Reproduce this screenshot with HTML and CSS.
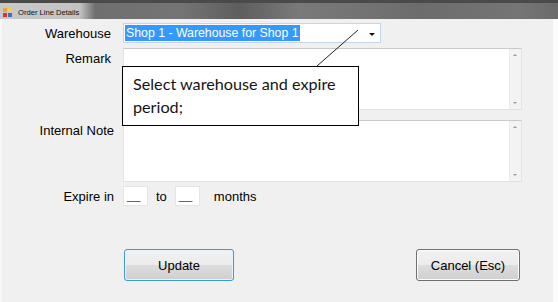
FILE: index.html
```html
<!DOCTYPE html>
<html lang="en">

<head>
  <meta charset="UTF-8" />
  <title>Order Line Details</title>
  <link rel="stylesheet" href="styles.css">
</head>

<body>
  <div class="window">
    <div class="titlebar">
      <svg class="app-icon" width="9" height="9" viewBox="0 0 9 9">
        <rect x="0" y="0" width="4" height="4" fill="#e8a33a" />
        <rect x="5" y="0" width="4" height="4" fill="#f2d04a" />
        <rect x="0" y="5" width="4" height="4" fill="#d8342c" />
        <rect x="5" y="5" width="4" height="4" fill="#3d6fc4" />
      </svg>
      <span class="title">Order Line Details</span>
    </div>

    <div class="client">
      <div class="form">
        <div class="row row-combo">
          <label class="lbl lbl-in">Warehouse</label>
          <div class="combo">
            <span class="combo-text">Shop 1 - Warehouse for Shop 1</span>
            <span class="combo-arrow"></span>
          </div>
        </div>

        <div class="row row-memo">
          <label class="lbl lbl-in">Remark</label>
          <div class="memo">
            <div class="vscroll"><span class="up"></span><span class="down"></span></div>
          </div>
        </div>

        <div class="row row-memo row-note">
          <label class="lbl">Internal Note</label>
          <div class="memo">
            <div class="vscroll"><span class="up"></span><span class="down"></span></div>
          </div>
        </div>

        <div class="row row-expire">
          <label class="lbl">Expire in</label>
          <div class="expire">
            <span class="small-box">__</span>
            <span class="to">to</span>
            <span class="small-box">__</span>
            <span class="months">months</span>
          </div>
        </div>
      </div>

      <div class="buttons">
        <button class="btn btn-default">Update</button>
        <button class="btn btn-cancel">Cancel (Esc)</button>
      </div>

      <!-- annotation callout -->
      <svg class="callout-line" width="60" height="50" viewBox="0 0 60 50">
        <line x1="56" y1="1" x2="15" y2="37" stroke="#222" stroke-width="1" />
      </svg>
      <div class="callout">Select warehouse and expire period;</div>
    </div>
    <div class="edge"></div>
  </div>
</body>

</html>
```

FILE: styles.css
```css
* { margin: 0; padding: 0; box-sizing: border-box; }
body {
  font-family: "Liberation Sans", Arial, sans-serif;
  background: #fbfbfb;
  width: 558px;
  height: 302px;
  overflow: hidden;
}
.window {
  position: relative;
  width: 558px;
  height: 302px;
}
.titlebar {
  height: 19px;
  display: flex;
  align-items: center;
  gap: 6px;
  padding: 2px 0 0 3px;
  border-top: 3px solid #4a4a4a;
  background: linear-gradient(90deg, #c9c9c9 0, #c2c2c2 80px, #6f6f6f 95px, #747474 180px, #5e5e5e 240px, #7a7a7a 300px, #6c6c6c 420px, #757575 520px, #6a6a6a 558px);
}
.app-icon { flex: none; }
.title {
  font-family: "Liberation Sans", Arial, sans-serif;
  font-size: 7.6px;
  color: #111;
}
.client {
  position: relative;
  margin-left: 2px;
  width: 551px;
  height: 283px;
  background: #f0f0f0;
  padding-top: 4px;
  font-size: 13px;
  color: #000;
}
.form { display: flex; flex-direction: column; }
.row { display: flex; align-items: flex-start; }
.lbl {
  width: 112px;
  text-align: right;
  flex: none;
}
.lbl-in { padding-right: 3px; }
.row-combo { align-items: center; height: 20px; }
.combo {
  margin-left: 9px;
  width: 258px;
  height: 20px;
  background: #fff;
  border: 1px solid #c5d6ea;
  display: flex;
  align-items: center;
  padding-left: 1px;
  position: relative;
}
.combo-text {
  background: #3399ff;
  color: #fff;
  line-height: 16px;
  padding: 0 1px;
  font-size: 12.3px;
  white-space: nowrap;
}
.combo-arrow {
  position: absolute;
  right: 5px;
  top: 9px;
  border-left: 3px solid transparent;
  border-right: 3px solid transparent;
  border-top: 3px solid #111;
}
.row-memo { margin-top: 5px; }
.row-memo .lbl { padding-top: 3px; }
.row-note { margin-top: 10px; }
.memo {
  margin-left: 9px;
  width: 399px;
  height: 62px;
  background: #fff;
  border: 1px solid #e3e3e3;
  border-top-color: #c9c9c9;
  position: relative;
}
.vscroll {
  position: absolute;
  right: 0;
  top: 0;
  bottom: 0;
  width: 12px;
  background: #f3f3f3;
  border-left: 1px solid #ececec;
}
.vscroll .up, .vscroll .down {
  position: absolute;
  left: 3px;
  border-left: 2px solid transparent;
  border-right: 2px solid transparent;
}
.vscroll .up { top: 5px; border-bottom: 2px solid #9a9a9a; }
.vscroll .down { bottom: 5px; border-top: 2px solid #9a9a9a; }
.row-expire { margin-top: 4px; align-items: center; height: 20px; }
.expire {
  margin-left: 9px;
  display: flex;
  align-items: center;
}
.small-box {
  width: 25px;
  height: 20px;
  background: #fff;
  border: 1px solid #e4e4e4;
  color: #555;
  font-size: 12px;
  line-height: 17px;
  padding-left: 3px;
}
.to { margin: 0 8px 0 8px; }
.months { margin-left: 14px; }
.buttons {
  display: flex;
  justify-content: space-between;
  margin-top: 43px;
  padding: 0 33px 0 122px;
}
.btn {
  height: 32px;
  font-family: "Liberation Sans", Arial, sans-serif;
  font-size: 13px;
  color: #000;
  border-radius: 3px;
  background: linear-gradient(#f2f2f2 0, #ebebeb 50%, #dddddd 51%, #cfcfcf 100%);
  border: 1px solid #707070;
  box-shadow: inset 0 0 0 1px #fcfcfc;
}
.btn-default {
  width: 110px;
  border-color: #3c9bd6;
  box-shadow: inset 0 0 0 1px #e8f3fb;
}
.btn-cancel { width: 104px; }
.callout {
  position: absolute;
  left: 120px;
  top: 47px;
  width: 237px;
  height: 60px;
  background: #fff;
  border: 1px solid #000;
  padding: 5px 0 0 10px;
  font-family: Lato, "Open Sans", sans-serif;
  font-size: 16.2px;
  line-height: 23px;
  color: #141414;
}
.callout-line {
  position: absolute;
  left: 300px;
  top: 10px;
}
.edge {
  position: absolute;
  left: 0;
  top: 19px;
  width: 2px;
  bottom: 0;
  background: #f8f8f8;
}
```
